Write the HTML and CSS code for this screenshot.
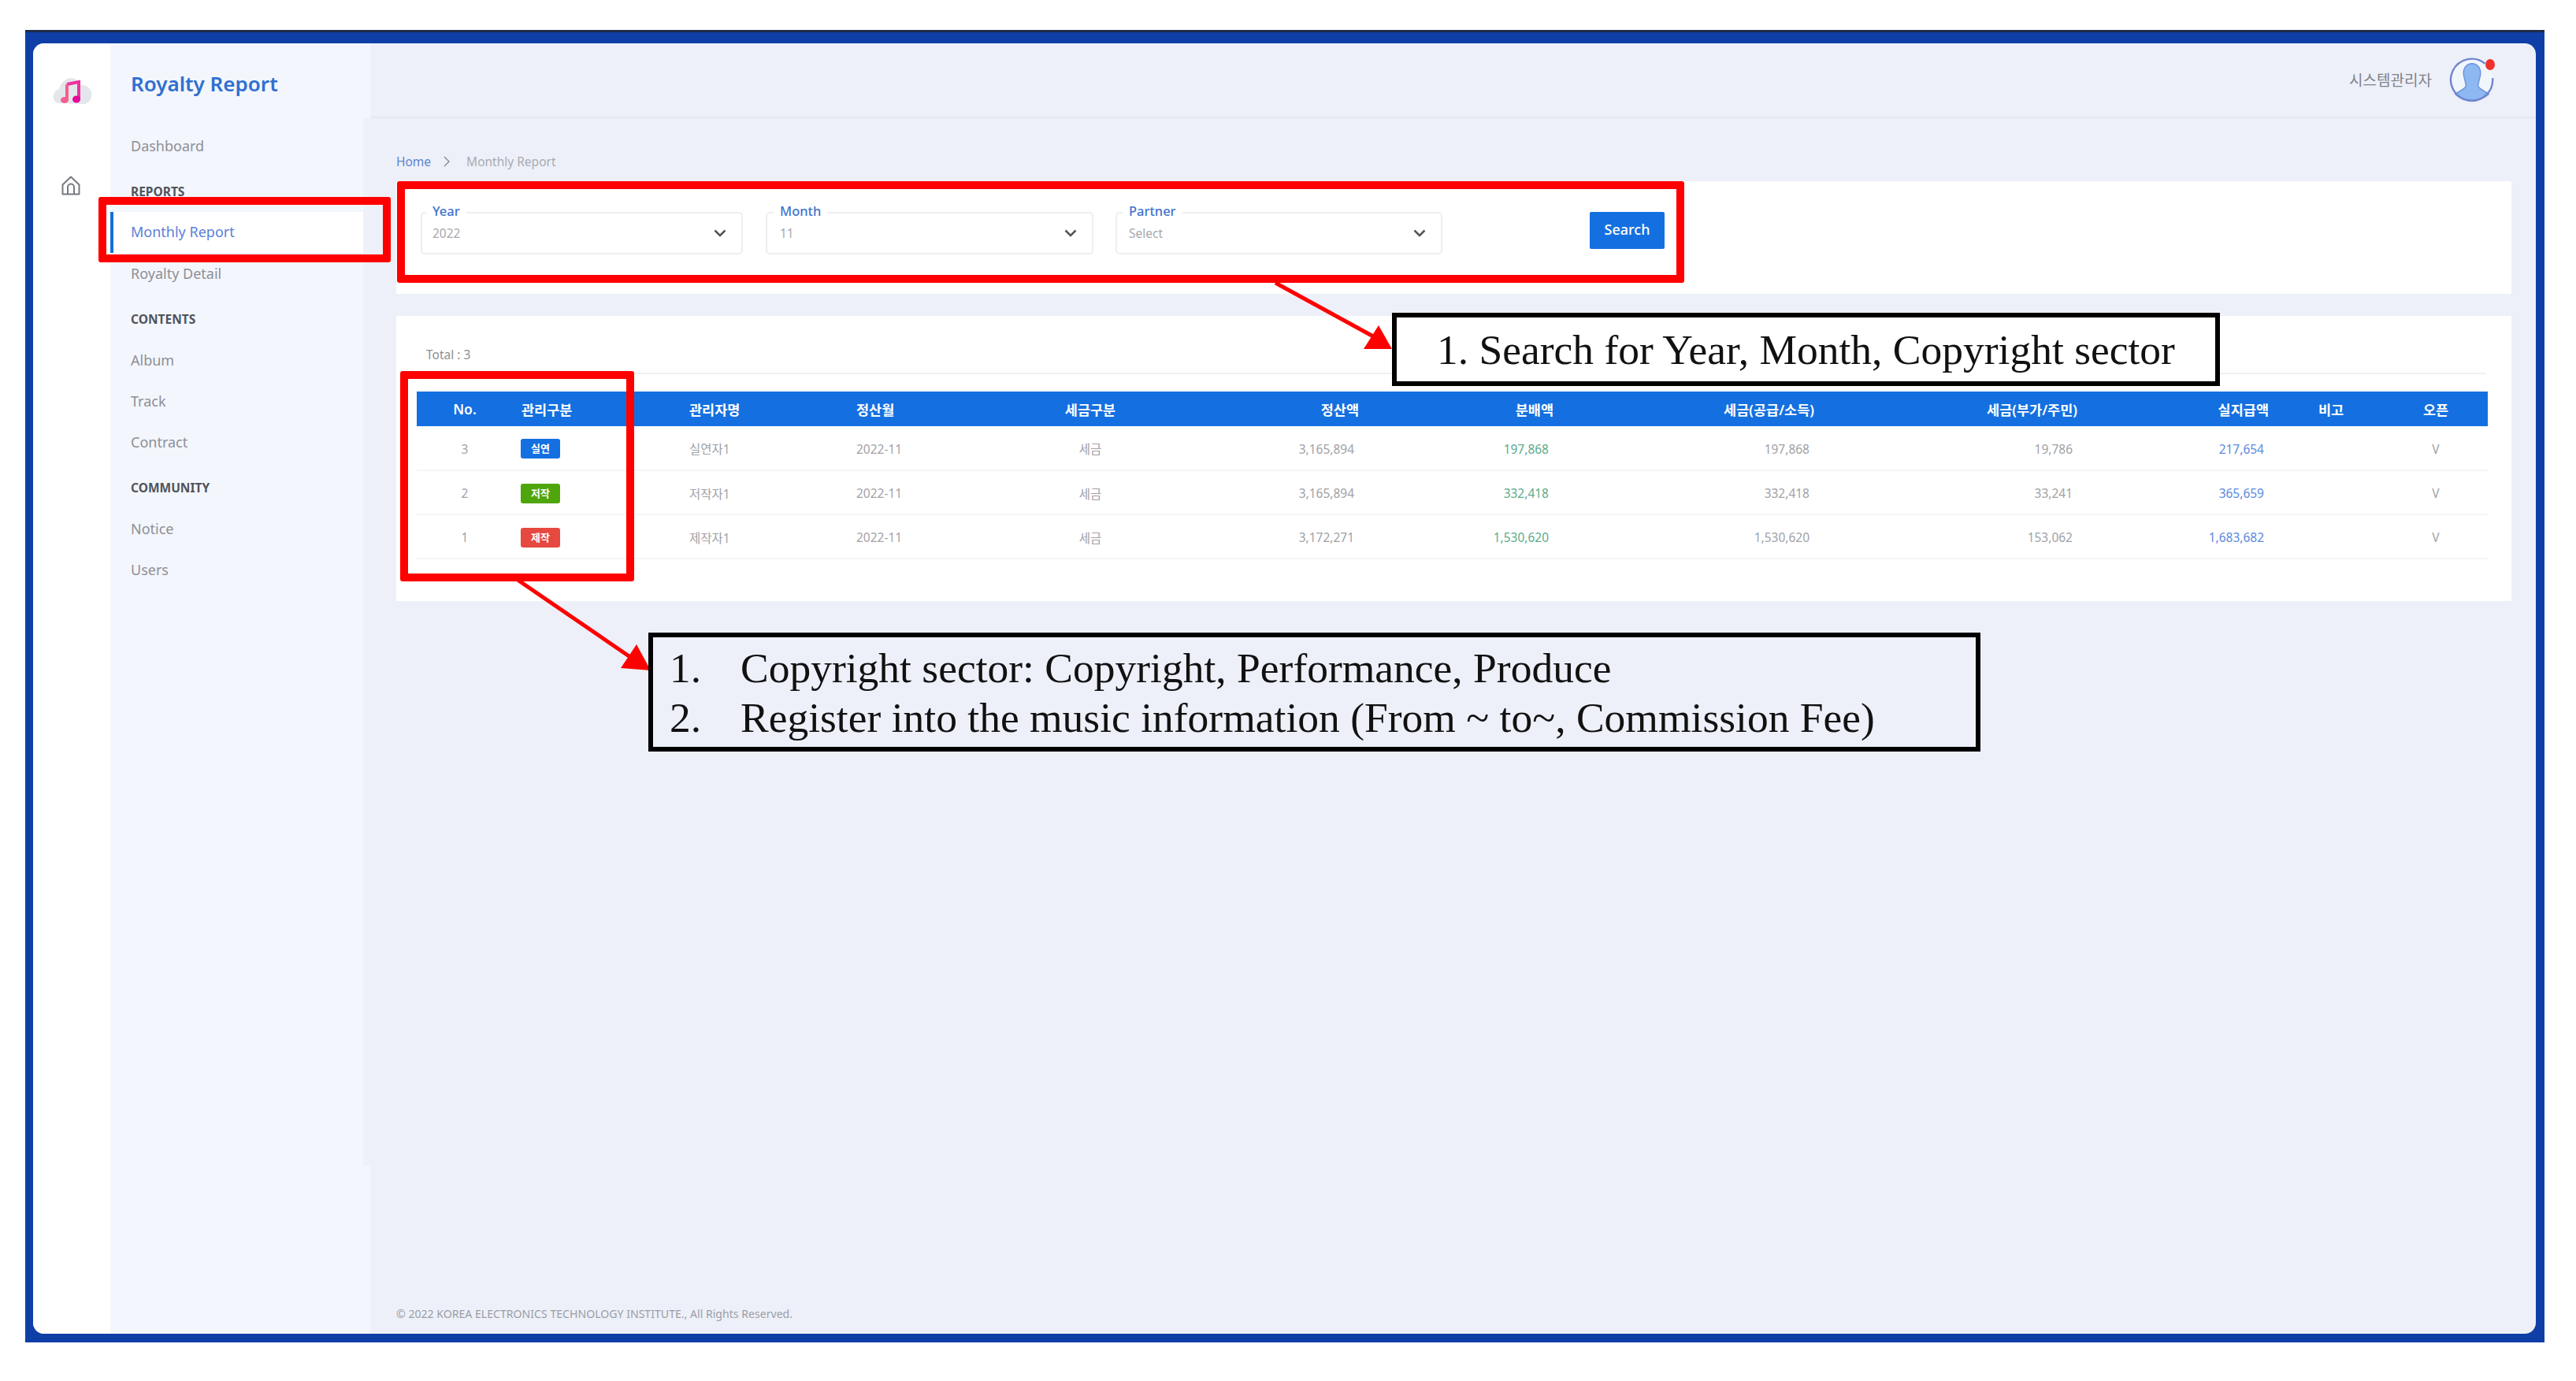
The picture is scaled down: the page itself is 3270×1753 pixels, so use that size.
FILE: index.html
```html
<!DOCTYPE html>
<html lang="ko">
<head>
<meta charset="utf-8">
<title>Royalty Report</title>
<link rel="stylesheet" href="styles.css">
</head>
<body>
<div class="page">
  <div class="frame">
    <div class="app">
      <aside class="rail">
        <svg class="logo" viewBox="0 0 52 42" aria-hidden="true">
          <path d="M8 36c-6-1-8-8-5-13 1-3 4-4 6-5 2-9 10-15 17-14 5 1 8 4 9 9 6-1 13 2 15 9 2 8-3 14-9 15z" fill="#e3e7ec"/>
          <path d="M19 12l15-3v22" fill="none" stroke="#ef2f9e" stroke-width="4"/>
          <path d="M19 12v20" fill="none" stroke="#f4608f" stroke-width="4"/>
          <ellipse cx="16" cy="32" rx="5" ry="4" fill="#f4608f"/>
          <ellipse cx="31" cy="31" rx="5" ry="4.500" fill="#e4089a"/>
        </svg>
        <svg class="home" viewBox="0 0 24 25" aria-hidden="true">
          <path d="M1.500 11.500L12 1.500l10.500 10V23.500H1.500z" fill="none" stroke="#777a80" stroke-width="2" stroke-linejoin="round"/>
          <path d="M8 23.500V14.500a4 4 0 0 1 8 0v9" fill="none" stroke="#777a80" stroke-width="2"/>
        </svg>
      </aside>
      <nav class="sidebar">
        <div class="brand">Royalty Report</div>
        <a class="nav-item">Dashboard</a>
        <div class="nav-title">REPORTS</div>
        <a class="nav-item active">Monthly Report</a>
        <a class="nav-item">Royalty Detail</a>
        <div class="nav-title">CONTENTS</div>
        <a class="nav-item">Album</a>
        <a class="nav-item">Track</a>
        <a class="nav-item">Contract</a>
        <div class="nav-title">COMMUNITY</div>
        <a class="nav-item">Notice</a>
        <a class="nav-item">Users</a>
        <span class="sidebar-track"></span>
      </nav>
      <main class="main">
        <header class="topbar">
          <span class="user-name">시스템관리자</span>
          <span class="avatar">
            <svg viewBox="0 0 60 60" aria-hidden="true">
              <circle cx="30" cy="30" r="27" fill="#f1f6fd"/>
              <path d="M30 9c-8 0-12 7-11 15 1 6 3 10 3 14 0 4-8 6-14 11 5 5 13 8 22 8s17-3 22-8c-6-5-14-7-14-11 0-4 2-8 3-14 1-8-3-15-11-15z" fill="#8db8f2" stroke="#6d92dc" stroke-width="1.500"/>
              <path d="M47 9A27.500 27.500 0 1 0 57 28" fill="none" stroke="#6f86cf" stroke-width="2.500"/>
            </svg>
            <span class="avatar-dot"></span>
          </span>
        </header>
        <div class="content">
          <div class="breadcrumb">
            <a class="crumb-link">Home</a>
            <svg class="crumb-sep" viewBox="0 0 8 14" aria-hidden="true"><path d="M1 1l6 6-6 6" fill="none" stroke="#8a8f99" stroke-width="1.500"/></svg>
            <span class="crumb-current">Monthly Report</span>
          </div>
          <section class="card search-card">
            <div class="field field-year">
              <label class="field-label">Year</label>
              <span class="field-value">2022</span>
              <svg class="chev" viewBox="0 0 16 10" aria-hidden="true"><path d="M1.500 1.500L8 8l6.500-6.500" fill="none" stroke="#555" stroke-width="2.500"/></svg>
            </div>
            <div class="field field-month">
              <label class="field-label">Month</label>
              <span class="field-value">11</span>
              <svg class="chev" viewBox="0 0 16 10" aria-hidden="true"><path d="M1.500 1.500L8 8l6.500-6.500" fill="none" stroke="#555" stroke-width="2.500"/></svg>
            </div>
            <div class="field field-partner">
              <label class="field-label">Partner</label>
              <span class="field-value">Select</span>
              <svg class="chev" viewBox="0 0 16 10" aria-hidden="true"><path d="M1.500 1.500L8 8l6.500-6.500" fill="none" stroke="#555" stroke-width="2.500"/></svg>
            </div>
            <button class="search-btn">Search</button>
          </section>
          <section class="card result-card">
            <div class="total">Total : 3</div>
            <table class="report">
              <colgroup>
                <col class="c1"><col class="c2"><col class="c3"><col class="c4"><col class="c5"><col class="c6">
                <col class="c7"><col class="c8"><col class="c9"><col class="c10"><col class="c11"><col class="c12">
              </colgroup>
              <thead>
                <tr>
                  <th>No.</th><th>관리구분</th><th>관리자명</th><th>정산월</th><th>세금구분</th><th>정산액</th>
                  <th>분배액</th><th>세금(공급/소득)</th><th>세금(부가/주민)</th><th>실지급액</th><th>비고</th><th>오픈</th>
                </tr>
              </thead>
              <tbody>
                <tr>
                  <td>3</td><td><span class="badge blue">실연</span></td><td>실연자1</td><td>2022-11</td><td>세금</td><td>3,165,894</td>
                  <td class="green">197,868</td><td>197,868</td><td>19,786</td><td class="link">217,654</td><td></td><td>V</td>
                </tr>
                <tr>
                  <td>2</td><td><span class="badge lime">저작</span></td><td>저작자1</td><td>2022-11</td><td>세금</td><td>3,165,894</td>
                  <td class="green">332,418</td><td>332,418</td><td>33,241</td><td class="link">365,659</td><td></td><td>V</td>
                </tr>
                <tr>
                  <td>1</td><td><span class="badge red">제작</span></td><td>제작자1</td><td>2022-11</td><td>세금</td><td>3,172,271</td>
                  <td class="green">1,530,620</td><td>1,530,620</td><td>153,062</td><td class="link">1,683,682</td><td></td><td>V</td>
                </tr>
              </tbody>
            </table>
          </section>
          <footer class="copyright">© 2022 KOREA ELECTRONICS TECHNOLOGY INSTITUTE., All Rights Reserved.</footer>
        </div>
      </main>
    </div>
  </div>

  <div class="mark mark-nav"></div>
  <div class="mark mark-search"></div>
  <div class="mark mark-table"></div>
  <svg class="arrows" viewBox="0 0 3270 1753" aria-hidden="true">
    <path d="M1619 359L1745 428" stroke="#f00" stroke-width="5" fill="none"/>
    <path d="M1767 443L1731 443L1750 413z" fill="#f00"/>
    <path d="M657 736L800 834" stroke="#f00" stroke-width="5" fill="none"/>
    <path d="M826 851L788 848L808 818z" fill="#f00"/>
  </svg>
  <div class="note note-search">1. Search for Year, Month, Copyright sector</div>
  <div class="note note-table">
    <div class="note-line"><span class="note-num">1.</span>Copyright sector: Copyright, Performance, Produce</div>
    <div class="note-line"><span class="note-num">2.</span>Register into the music information (From ~ to~, Commission Fee)</div>
  </div>
</div>
</body>
</html>
```
FILE: styles.css
```css
* { box-sizing: border-box; }
html, body { margin: 0; padding: 0; background: #fff; }
body { font-family: "Noto Sans", "Noto Sans CJK KR", sans-serif; color: #8a8d96; }

.page { position: relative; width: 3270px; height: 1753px; overflow: hidden; background: #fff; padding: 38px 40px 49px 32px; }
.frame { height: 100%; background: #0f3fa6; border-top: 3px solid #1f2b4a; padding: 14px 11px 11px 10px; }
.app { height: 100%; display: grid; grid-template-columns: 98px 330px 1fr; border-radius: 14px; overflow: hidden; background: #edf0f8; }

/* icon rail */
.rail { background: #fff; display: flex; flex-direction: column; align-items: flex-start; }
.logo { width: 52px; height: 42px; margin: 40px 0 0 24px; }
.home { width: 24px; height: 25px; margin: 86px 0 0 36px; }

/* sidebar */
.sidebar { position: relative; background: #f3f6fc; padding-left: 26px; display: flex; flex-direction: column; }
.sidebar-track { position: absolute; right: 0; top: 95px; width: 9px; height: 1330px; background: #eef1f9; }
.brand { height: 104px; padding-top: 33px; font-size: 26px; line-height: 36px; font-weight: 600; color: #2f6fd0; }
.nav-item { position: relative; height: 52px; line-height: 52px; font-size: 18px; color: #8d8f98; }
.nav-item.active { color: #5b80d8; margin-left: -26px; padding-left: 26px; background: #fff; line-height: 50px; }
.nav-item.active::before { content: ""; position: absolute; left: 0; top: 0; width: 4px; height: 52px; background: #1470d8; }
.nav-title { padding: 21px 0 15px; font-size: 15.500px; line-height: 22px; font-weight: 700; color: #50535c; }

/* top bar */
.main { display: flex; flex-direction: column; min-width: 0; }
.topbar { height: 95px; flex: none; border-bottom: 2px solid #e4e7ef; display: flex; justify-content: flex-end; align-items: center; padding: 0 52px 2px 0; gap: 22px; }
.user-name { font-size: 19px; color: #7f828a; }
.avatar { position: relative; width: 58px; height: 58px; display: block; }
.avatar svg { display: block; width: 58px; height: 58px; }
.avatar-dot { position: absolute; top: 3px; right: 0; width: 12px; height: 14px; border-radius: 50%; background: #f0322e; }

/* content */
.content { flex: 1; display: flex; flex-direction: column; padding: 0 31px 0 33px; }
.breadcrumb { height: 80px; flex: none; display: flex; align-items: center; padding-top: 29px; font-size: 15.500px; }
.crumb-link { color: #5b84d2; }
.crumb-sep { width: 8px; height: 14px; margin: 0 21px 0 16px; }
.crumb-current { color: #a9abb2; }

.card { background: #fff; }
.search-card { height: 143px; display: flex; align-items: flex-start; padding: 39px 0 0 31px; }
.field { position: relative; height: 54px; border: 2px solid #eceef2; border-radius: 5px; display: flex; align-items: center; justify-content: space-between; padding: 0 19px 0 13px; }
.field-year { width: 409px; margin-right: 29px; }
.field-month { width: 416px; margin-right: 28px; padding-left: 16px; }
.field-partner { width: 415px; margin-right: 187px; padding-left: 15px; }
.field-label { position: absolute; left: 5px; top: -14px; padding: 0 8px; background: #fff; font-size: 16.500px; line-height: 22px; font-weight: 500; color: #3f73cf; }
.field-month .field-label { left: 8px; }
.field-partner .field-label { left: 7px; }
.field-value { font-size: 15.500px; color: #a6a8ad; }
.chev { width: 16px; height: 10px; }
.search-btn { width: 95px; height: 47px; padding: 0 0 4px; border: 0; border-radius: 2px; background: #1470e0; color: #fff; font: 500 18px "Noto Sans", sans-serif; }

.result-card { height: 362px; margin-top: 28px; padding: 37px 30px 0 26px; }
.total { margin: 0 2px 22px 12px; padding-bottom: 11px; border-bottom: 2px solid #eff0f3; font-size: 15.500px; line-height: 24px; color: #8c8e94; }

.report { width: 2629px; table-layout: fixed; border-collapse: collapse; font-size: 15.500px; }
.c1 { width: 122px; } .c2 { width: 224px; } .c3 { width: 212px; } .c4 { width: 213px; }
.c5 { width: 168px; } .c6 { width: 257px; } .c7 { width: 247px; } .c8 { width: 331px; }
.c9 { width: 334px; } .c10 { width: 243px; } .c11 { width: 158px; } .c12 { width: 120px; }

.report th { height: 44px; padding: 0; background: #1470e0; color: #fff; font-size: 17.500px; font-weight: 600; white-space: nowrap; }
.report td { height: 56px; padding: 2px 0 0; border-bottom: 2px solid #f5f6f9; color: #a0a2a7; white-space: nowrap; }
.report th:nth-child(-n+4), .report td:nth-child(-n+4) { text-align: left; }
.report th:first-child, .report td:first-child { text-align: center; }
.report th:nth-child(2) { padding-left: 11px; }
.report td:nth-child(2) { padding-left: 10px; }
.report th:nth-child(5), .report td:nth-child(5) { text-align: center; }
.report th:nth-child(n+6):nth-child(-n+10), .report td:nth-child(n+6):nth-child(-n+10) { text-align: right; }
.report td:nth-child(n+6):nth-child(-n+10) { padding-right: 6px; }
.report th:nth-child(11), .report td:nth-child(11) { text-align: center; }
.report th:nth-child(12), .report td:nth-child(12) { text-align: center; padding-right: 12px; }
.report td.green { color: #5cab8d; }
.report td.link { color: #5a8bde; }

.badge { display: inline-block; width: 50px; height: 25px; border-radius: 3px; color: #fff; font-size: 13px; line-height: 25px; font-weight: 700; text-align: center; vertical-align: middle; }
.badge.blue { background: #1470e0; }
.badge.lime { background: #4fa60c; }
.badge.red { background: #e5493f; }

.copyright { margin-top: auto; padding-bottom: 15px; font-size: 14.100px; line-height: 20px; color: #9b9da6; }

/* annotations drawn over the screenshot */
.mark { position: absolute; border: 10px solid #f00; border-radius: 3px; }
.mark-nav { left: 125px; top: 250px; width: 371px; height: 83px; }
.mark-search { left: 504px; top: 230px; width: 1634px; height: 129px; }
.mark-table { left: 508px; top: 471px; width: 297px; height: 267px; }
.arrows { position: absolute; left: 0; top: 0; width: 3270px; height: 1753px; }
.note { position: absolute; border: 6px solid #000; font-family: "Liberation Serif", serif; color: #111; white-space: nowrap; }
.note-search { left: 1767px; top: 397px; width: 1051px; height: 93px; background: #fff; padding-left: 51px; font-size: 53.500px; line-height: 82px; }
.note-table { left: 823px; top: 803px; width: 1691px; height: 151px; padding: 8px 0 0 21px; font-size: 53.500px; }
.note-line { height: 63px; line-height: 63px; display: flex; }
.note-num { width: 90px; flex: none; }
```
